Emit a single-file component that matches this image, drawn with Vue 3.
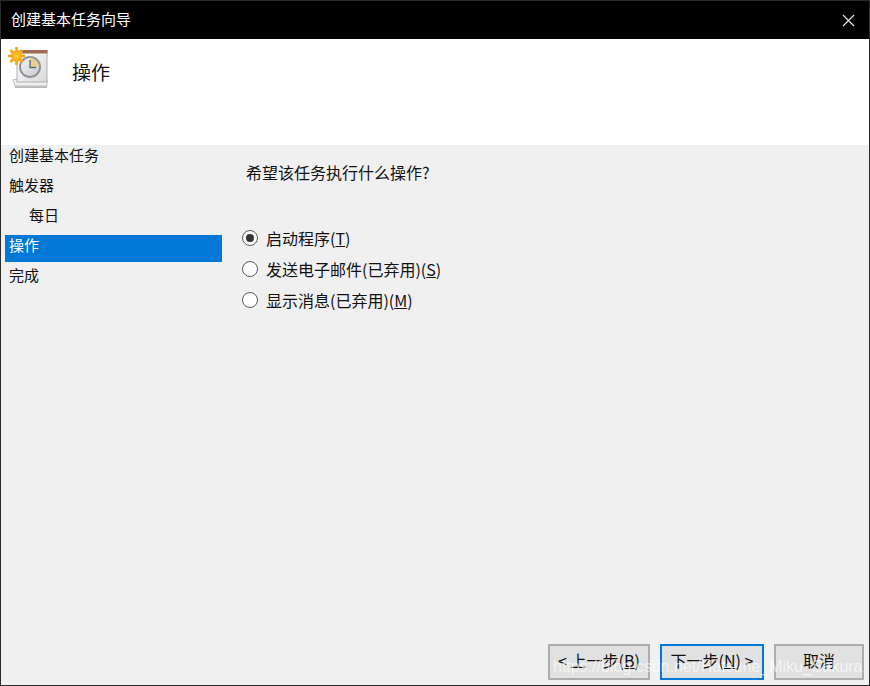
<template>
  <div class="wizard">
    <div class="titlebar">
      <span class="title-text">创建基本任务向导</span>
      <svg class="close" width="13" height="13" viewBox="0 0 13 13">
        <path d="M1 1L12 12M12 1L1 12" stroke="#e8e8e8" stroke-width="1.2" fill="none" />
      </svg>
    </div>

    <div class="banner">
      <svg class="task-icon" width="42" height="42" viewBox="0 0 42 42">
        <defs>
          <linearGradient id="pageFill" x1="0" y1="0" x2="1" y2="1">
            <stop offset="0" stop-color="#ffffff" />
            <stop offset="1" stop-color="#d8d8d8" />
          </linearGradient>
          <linearGradient id="faceFill" x1="0" y1="0" x2="1" y2="1">
            <stop offset="0" stop-color="#f4f4f4" />
            <stop offset="1" stop-color="#c9ccd2" />
          </linearGradient>
          <radialGradient id="sunFill">
            <stop offset="0" stop-color="#ffd23a" />
            <stop offset="1" stop-color="#f7a30c" />
          </radialGradient>
        </defs>
        <path d="M5 32L7 41H39V36Z" fill="#b9b9b9" />
        <path d="M5 32.500H39V39H7Z" fill="#eeeeee" stroke="#c4c4c4" />
        <rect x="9" y="4" width="30" height="31" fill="url(#pageFill)" stroke="#b0b0b0" stroke-width="1" />
        <rect x="14" y="3" width="25.500" height="3.500" fill="#a06a56" />
        <circle cx="22" cy="20" r="11" fill="#8f9499" />
        <circle cx="22" cy="20" r="9" fill="url(#faceFill)" />
        <path d="M22 11A9 9 0 0 1 31 20H22Z" fill="#e9cf95" />
        <path d="M22 13V20.500H28" stroke="#55687a" stroke-width="1.300" fill="none" />
        <g stroke="#f6a410" stroke-width="2.600">
          <path d="M8.500 0V18M0 9H17M2.500 3L14.500 15M14.500 3L2.500 15" />
        </g>
        <circle cx="8.500" cy="9" r="5.500" fill="url(#sunFill)" />
      </svg>
      <span class="banner-title">操作</span>
    </div>

    <div class="content">
      <ul class="steps">
        <li v-for="step in steps" :key="step.label" class="step" :class="{ active: step.active, sub: step.sub }">
          <span>{{ step.label }}</span>
        </li>
      </ul>

      <div class="main">
        <p class="prompt">希望该任务执行什么操作?</p>
        <div class="options">
          <label v-for="opt in options" :key="opt.key" class="option">
            <span class="radio" :class="{ on: opt.checked }"></span>
            <span>{{ opt.label }}(<u>{{ opt.key }}</u>)</span>
          </label>
        </div>
      </div>
    </div>

    <div class="footer">
      <button class="btn prev">&lt; 上一步(<u>B</u>)</button>
      <button class="btn next">下一步(<u>N</u>) &gt;</button>
      <button class="btn cancel">取消</button>
    </div>

    <div class="watermark">https://blog.csdn.net/Hatsune_Miku_Sakura</div>
  </div>
</template>

<script setup>
const steps = [
  { label: '创建基本任务' },
  { label: '触发器' },
  { label: '每日', sub: true },
  { label: '操作', active: true },
  { label: '完成' }
]

const options = [
  { label: '启动程序', key: 'T', checked: true },
  { label: '发送电子邮件(已弃用)', key: 'S' },
  { label: '显示消息(已弃用)', key: 'M' }
]
</script>

<style>
html, body {
  margin: 0;
  background: #f0f0f0;
}
</style>

<style scoped>
.wizard {
  position: relative;
  box-sizing: border-box;
  width: 870px;
  height: 686px;
  display: flex;
  flex-direction: column;
  background: #f0f0f0;
  border: 1px solid #2a2a2a;
  font-family: "Noto Sans CJK SC", "Liberation Sans", sans-serif;
  color: #111;
  overflow: hidden;
}

.titlebar {
  height: 38px;
  flex: none;
  display: flex;
  align-items: center;
  justify-content: space-between;
  padding: 0 9px 0 10px;
  background: #000;
  color: #fff;
  font-size: 15px;
}

.title-text {
  margin-bottom: 4px;
}

.close {
  margin-right: 5px;
}

.banner {
  height: 106px;
  flex: none;
  display: flex;
  align-items: flex-start;
  background: #fff;
}

.task-icon {
  margin: 8px 0 0 7px;
  flex: none;
}

.banner-title {
  margin: 19px 0 0 22px;
  font-size: 19px;
  line-height: 27px;
}

.content {
  flex: 1;
  display: flex;
  min-height: 0;
}

.steps {
  width: 217px;
  margin: 0 0 0 4px;
  padding: 0;
  list-style: none;
  font-size: 15px;
  flex: none;
}

.step {
  height: 30px;
  line-height: 20px;
  padding-left: 4px;
  box-sizing: border-box;
}

.step.sub {
  padding-left: 24px;
}

.step.active {
  height: 27px;
  margin-bottom: 3px;
  background: #0078d7;
  color: #fff;
  line-height: 19px;
}

.main {
  flex: 1;
  padding-left: 24px;
}

.prompt {
  margin: 15px 0 0 0;
  font-size: 16px;
  line-height: 24px;
}

.options {
  margin-top: 38px;
  display: flex;
  flex-direction: column;
}

.option {
  display: flex;
  align-items: center;
  height: 31px;
  font-size: 16px;
  gap: 8px;
  margin-left: -4px;
}

.radio {
  box-sizing: border-box;
  width: 16px;
  height: 16px;
  border: 1.5px solid #5a5a5a;
  border-radius: 50%;
  background: #fff;
  display: flex;
  align-items: center;
  justify-content: center;
  flex: none;
}

.radio.on::after {
  content: "";
  width: 8px;
  height: 8px;
  border-radius: 50%;
  background: #333;
}

.footer {
  flex: none;
  display: flex;
  justify-content: flex-end;
  gap: 10px;
  padding: 0 5px 5px 0;
}

.btn {
  box-sizing: border-box;
  height: 36px;
  padding: 0 0 4px;
  border: 2px solid #adadad;
  background: #e1e1e1;
  color: #111;
  font-family: inherit;
  font-size: 16px;
}

.prev {
  width: 102px;
}

.next {
  width: 104px;
  border-color: #0078d7;
}

.cancel {
  width: 90px;
}

.watermark {
  position: absolute;
  left: 552px;
  top: 656px;
  font-family: "Liberation Sans", sans-serif;
  font-size: 16px;
  line-height: 20px;
  white-space: nowrap;
  color: rgba(255, 255, 255, 0.65);
}
</style>
